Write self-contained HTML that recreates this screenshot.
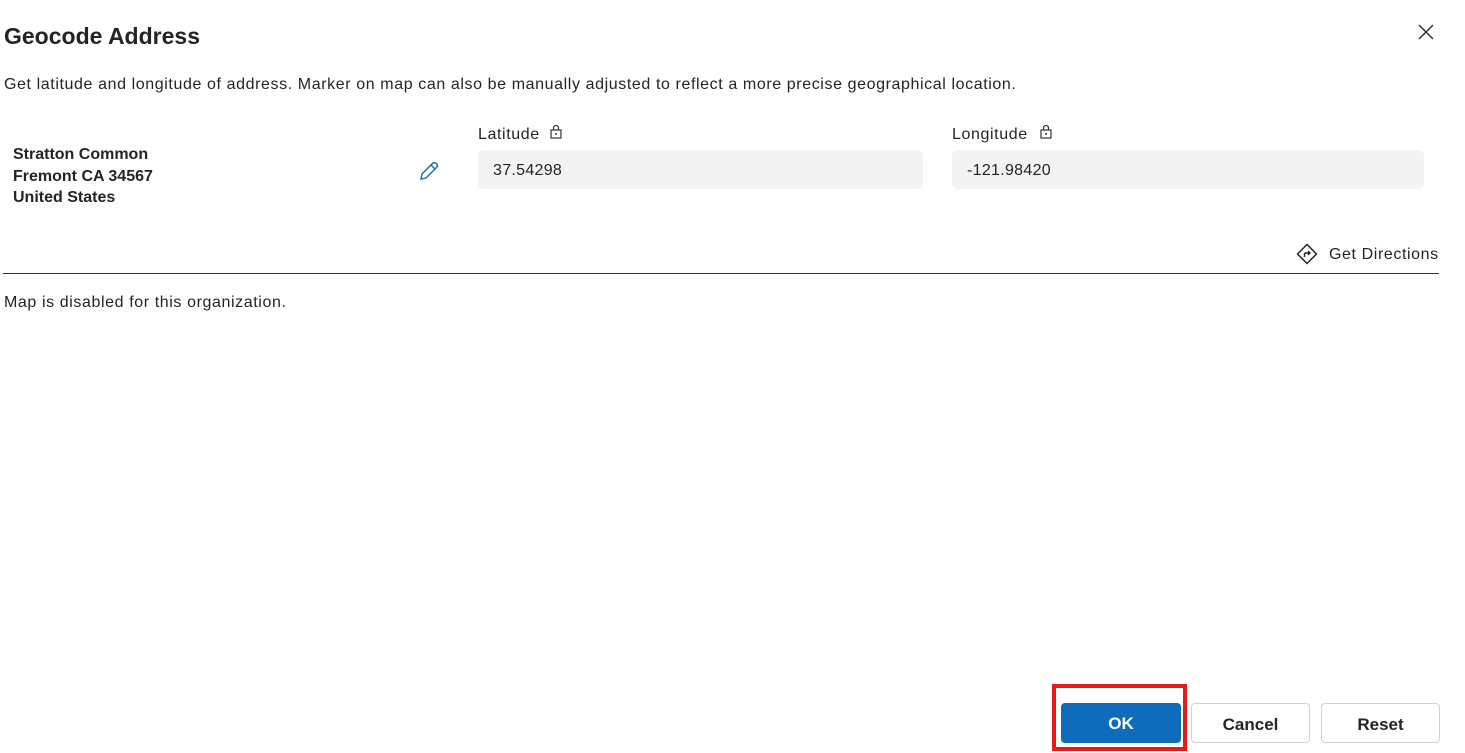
<!DOCTYPE html>
<html><head><style>
body{margin:0;width:1465px;height:753px;background:#fff;position:relative;font-family:"Liberation Sans",sans-serif;color:#242424;overflow:hidden}
.a{position:absolute;white-space:nowrap}
.r{letter-spacing:0.6px}
.inp{position:absolute;background:#f3f3f3;border-radius:6px;height:39px;top:150px;font-size:16px;line-height:41px;padding-left:15px;box-sizing:border-box;letter-spacing:0.3px}
.btn{position:absolute;top:703px;height:40px;border-radius:4px;box-sizing:border-box;font-size:17px;font-weight:bold;text-align:center;line-height:41px}
</style></head><body>
<div class="a" style="left:4px;top:23px;font-size:23px;font-weight:bold">Geocode Address</div>
<svg class="a" style="left:1417px;top:23px" width="18" height="18" viewBox="0 0 18 18"><path d="M2 2L16 16M16 2L2 16" stroke="#333" stroke-width="1.5"/></svg>
<div class="a r" style="left:4px;top:76px;font-size:16px">Get latitude and longitude of address. Marker on map can also be manually adjusted to reflect a more precise geographical location.</div>
<div class="a" style="left:13px;top:144px;font-size:16px;font-weight:bold;line-height:21.5px">Stratton Common<br>Fremont CA 34567<br>United States</div>
<svg class="a" style="left:418px;top:160px" width="22" height="22" viewBox="0 0 22 22"><path d="M3 19L4 14L15 3Q17 2 19 4Q20 6 19 7L8 18Z M13 5L17 9" fill="none" stroke="#0f6cbd" stroke-width="1.4"/></svg>
<div class="a r" style="left:478px;top:126px;font-size:16px">Latitude</div>
<svg class="a" style="left:549px;top:124px" width="14" height="16" viewBox="0 0 14 16"><rect x="2" y="6" width="10" height="8" fill="none" stroke="#333" stroke-width="1.2"/><path d="M4.5 6V4a2.5 2.5 0 0 1 5 0v2" fill="none" stroke="#333" stroke-width="1.2"/><circle cx="7" cy="10" r="1" fill="#333"/></svg>
<div class="a r" style="left:952px;top:126px;font-size:16px">Longitude</div>
<svg class="a" style="left:1039px;top:124px" width="14" height="16" viewBox="0 0 14 16"><rect x="2" y="6" width="10" height="8" fill="none" stroke="#333" stroke-width="1.2"/><path d="M4.5 6V4a2.5 2.5 0 0 1 5 0v2" fill="none" stroke="#333" stroke-width="1.2"/><circle cx="7" cy="10" r="1" fill="#333"/></svg>
<div class="inp" style="left:478px;width:445px">37.54298</div>
<div class="inp" style="left:952px;width:472px">-121.98420</div>
<svg class="a" style="left:1296px;top:243px" width="22" height="22" viewBox="0 0 22 22"><path d="M11 1.5L20.5 11L11 20.5L1.5 11Z" fill="none" stroke="#242424" stroke-width="1.5"/><path d="M8.5 14V11.5Q8.5 10 10 10H14M12 8L14 10L12 12" fill="none" stroke="#242424" stroke-width="1.4"/></svg>
<div class="a r" style="left:1329px;top:246px;font-size:16px">Get Directions</div>
<div class="a" style="left:3px;top:273px;width:1436px;height:1px;background:#333"></div>
<div class="a r" style="left:4px;top:294px;font-size:16px">Map is disabled for this organization.</div>
<div class="a" style="left:1052px;top:684px;width:135px;height:67px;box-sizing:border-box;border:4px solid #e21b1b"></div>
<div class="btn" style="left:1061px;width:120px;background:#0f6cbd;color:#fff;line-height:42px">OK</div>
<div class="btn" style="left:1191px;width:119px;border:1px solid #d1d1d1">Cancel</div>
<div class="btn" style="left:1321px;width:119px;border:1px solid #d1d1d1">Reset</div>
</body></html>
